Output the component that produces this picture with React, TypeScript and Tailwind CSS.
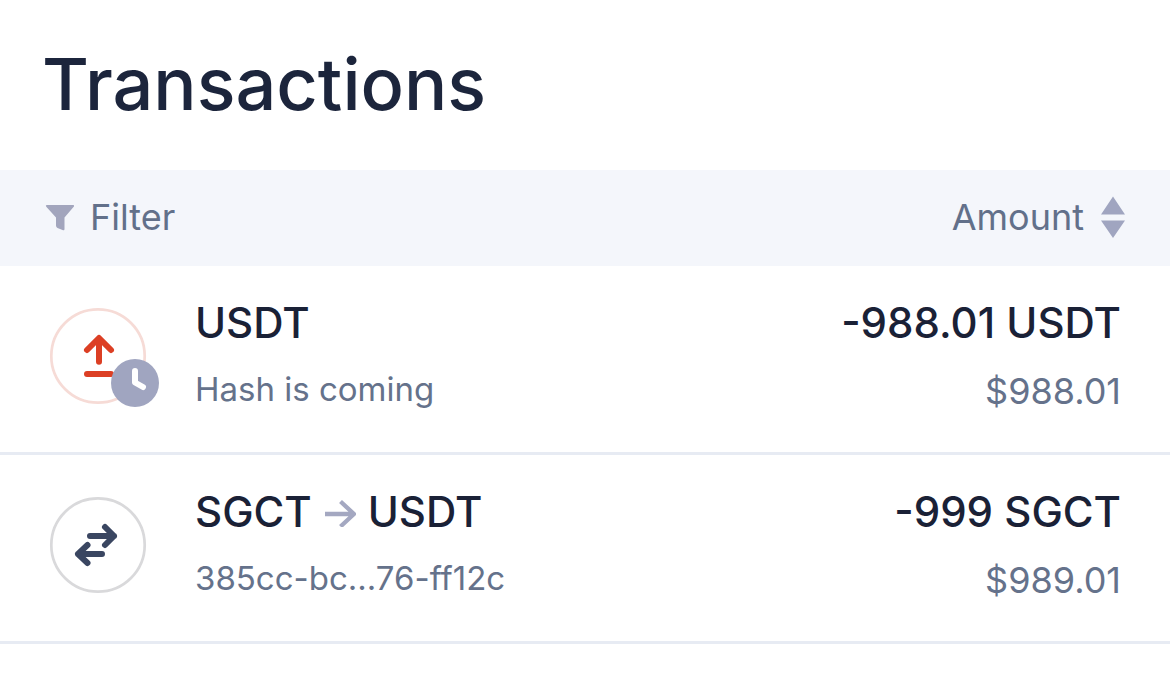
import React from 'react';

type Tx = { title: React.ReactNode; key: string; note: string; amount: string; fiat: string; icon: React.ReactNode };

const SendIcon = () => (
  <svg viewBox="0 0 112 104" className="h-[104px] w-28" fill="none" aria-hidden="true">
    <circle cx="50" cy="50" r="46.7" stroke="#f6dbd6" strokeWidth="2.7" />
    <path d="M51 55.700V32.500M39 44L51 32L63 44" stroke="#dc3f24" strokeWidth="6" strokeLinecap="round" strokeLinejoin="round" />
    <path d="M39 68H63" stroke="#dc3f24" strokeWidth="6" strokeLinecap="round" />
    <circle cx="87" cy="77" r="24" fill="#a0a5c0" />
    <path d="M87 65V76.500L95 81" stroke="#fff" strokeWidth="6" strokeLinecap="round" strokeLinejoin="round" />
  </svg>
);

const SwapIcon = () => (
  <svg viewBox="0 0 112 104" className="h-[104px] w-28" fill="none" aria-hidden="true">
    <circle cx="50" cy="50" r="46.7" stroke="#d9d9db" strokeWidth="2.7" />
    <path d="M42 41H66M57 32L66 41L57 50M54 59H30M39.500 50L30 59L39.500 68" stroke="#3a4661" strokeWidth="6" strokeLinecap="round" strokeLinejoin="round" />
  </svg>
);

const rows: Tx[] = [
  { key: 'send', title: 'USDT', note: 'Hash is coming', amount: '-988.01 USDT', fiat: '$988.01', icon: <SendIcon /> },
  {
    key: 'swap',
    title: (
      <>
        SGCT
        <svg viewBox="0 0 32 30" className="h-[30px] w-8" fill="none" role="img" aria-label="to">
          <path d="M1 17H30M16.500 4.500L30 17L16.500 29.500" stroke="#a4a8c1" strokeWidth="4.300" />
        </svg>
        USDT
      </>
    ),
    note: '385cc-bc...76-ff12c',
    amount: '-999 SGCT',
    fiat: '$989.01',
    icon: <SwapIcon />,
  },
];

export default function App() {
  return (
    <main className="min-h-screen bg-white font-['Inter',sans-serif] text-[#1a2136]">
      <h1 className="px-[42px] pt-[39px] pb-[41px] text-[72px] leading-[90px] font-medium text-[#1c253c]">Transactions</h1>
      <div className="flex h-24 items-center justify-between bg-[#f4f6fb] px-11 pb-0.5 text-[36px] text-[#62708a]">
        <button type="button" className="flex items-center gap-4">
          <svg viewBox="0 0 30 28" className="h-7 w-[30px]" fill="#a2a5bd" aria-hidden="true">
            <path d="M3 2H29Q31 2 29.500 4L20.500 14.500V26Q20.500 28 18.500 27L13.500 25Q12 24 12 22.500V14.500L2.500 4Q1 2 3 2Z" />
          </svg>
          Filter
        </button>
        <button type="button" className="flex items-center gap-4">
          Amount
          <svg viewBox="0 0 26 42" className="h-[42px] w-[26px]" fill="#a0a5c0" aria-hidden="true">
            <path d="M13 0.500L25 18.500H1ZM13 42L25 24.500H1Z" />
          </svg>
        </button>
      </div>
      <ul>
        {rows.map((r) => (
          <li key={r.key} className="flex h-[189px] items-start justify-between border-b-3 border-[#e7ebf3] pr-[49px] pl-12 pt-[31px]">
            <div className="flex gap-[35px]">
              <div className="pt-[9px]">{r.icon}</div>
              <div>
                <p className="flex items-center gap-3 text-[42px] leading-[52px] font-medium">{r.title}</p>
                <p className="mt-4 text-[33px] leading-[48px] text-[#65728b]">{r.note}</p>
              </div>
            </div>
            <div className="text-right">
              <p className="text-[42px] leading-[52px] font-medium">{r.amount}</p>
              <p className="mt-[18px] text-[36px] leading-[48px] text-[#65728b]">{r.fiat}</p>
            </div>
          </li>
        ))}
      </ul>
    </main>
  );
}
